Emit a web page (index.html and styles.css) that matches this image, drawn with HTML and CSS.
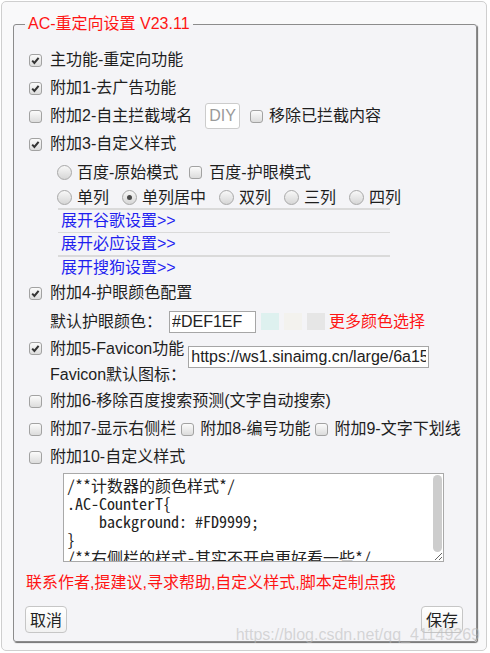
FILE: index.html
```html
<!DOCTYPE html>
<html lang="zh-CN">
<head>
<meta charset="utf-8">
<title>AC-重定向设置</title>
<link rel="stylesheet" href="styles.css">
</head>
<body>
<div class="panel">
  <fieldset class="box">
    <legend class="title">AC-重定向设置 V23.11</legend>

    <div class="row"><span class="cb on"><svg viewBox="0 0 11 11"><path d="M2.2 5.6 4.4 8 8.6 2.8" fill="none" stroke="#333" stroke-width="2"/></svg></span><span>主功能-重定向功能</span></div>
    <div class="row"><span class="cb on"><svg viewBox="0 0 11 11"><path d="M2.2 5.6 4.4 8 8.6 2.8" fill="none" stroke="#333" stroke-width="2"/></svg></span><span>附加1-去广告功能</span></div>
    <div class="row"><span class="cb"></span><span>附加2-自主拦截域名</span><span class="diy">DIY</span><span class="cb cb-mid"></span><span>移除已拦截内容</span></div>
    <div class="row"><span class="cb on"><svg viewBox="0 0 11 11"><path d="M2.2 5.6 4.4 8 8.6 2.8" fill="none" stroke="#333" stroke-width="2"/></svg></span><span>附加3-自定义样式</span></div>

    <div class="row radios r29"><span class="rd"></span><span>百度-原始模式</span><span class="cb cb-mid cb-gap"></span><span>百度-护眼模式</span></div>
    <div class="row radios r21"><span class="rd"></span><span>单列</span><span class="rd rd-gap on"></span><span>单列居中</span><span class="rd rd-gap"></span><span>双列</span><span class="rd rd-gap"></span><span>三列</span><span class="rd rd-gap"></span><span>四列</span></div>

    <div class="links">
      <div class="link thick">展开谷歌设置&gt;&gt;</div>
      <div class="link thin">展开必应设置&gt;&gt;</div>
      <div class="link thick">展开搜狗设置&gt;&gt;</div>
    </div>

    <div class="row"><span class="cb on"><svg viewBox="0 0 11 11"><path d="M2.2 5.6 4.4 8 8.6 2.8" fill="none" stroke="#333" stroke-width="2"/></svg></span><span>附加4-护眼颜色配置</span></div>
    <div class="row r29 indent"><span>默认护眼颜色：</span><input class="hex" type="text" value="#DEF1EF"><span class="sw sw1"></span><span class="sw sw2"></span><span class="sw sw3"></span><span class="more">更多颜色选择</span></div>
    <div class="row fav"><span class="cb on cb-top"><svg viewBox="0 0 11 11"><path d="M2.2 5.6 4.4 8 8.6 2.8" fill="none" stroke="#333" stroke-width="2"/></svg></span><span class="fav-label">附加5-Favicon功能</span><input class="url" type="text" value="https://ws1.sinaimg.cn/large/6a155794ly1g1hn9o8ekzj200w00w0s3.jpg"></div>
    <div class="row r24 indent"><span>Favicon默认图标：</span></div>
    <div class="row"><span class="cb"></span><span>附加6-移除百度搜索预测(文字自动搜索)</span></div>
    <div class="row"><span class="cb"></span><span>附加7-显示右侧栏</span><span class="cb cb-mid cb-near"></span><span>附加8-编号功能</span><span class="cb cb-mid cb-near"></span><span>附加9-文字下划线</span></div>
    <div class="row"><span class="cb"></span><span>附加10-自定义样式</span></div>

    <div class="editor">
      <textarea class="css" wrap="off">/**计数器的颜色样式*/
.AC-CounterT{
    background: #FD9999;
}
/**右侧栏的样式-其实不开启更好看一些*/
#content_right{
    border-left:1px solid #e1e1e1;
}</textarea>
      <span class="thumb"></span>
    </div>

    <div class="contact">联系作者,提建议,寻求帮助,自定义样式,脚本定制点我</div>

    <div class="actions">
      <button class="btn" type="button">取消</button>
      <button class="btn" type="button">保存</button>
    </div>
  </fieldset>
  <div class="wm">https://blog.csdn.net/qq_41149269</div>
</div>
</body>
</html>
```

FILE: styles.css
```css
* {
  box-sizing: border-box;
}

body {
  margin: 0;
  background: #ffffff;
  font-family: "Liberation Sans", "Noto Sans CJK SC", sans-serif;
  font-size: 16px;
  color: #1e1e1e;
}

.panel {
  position: relative;
  margin: 1px;
  width: 486px;
  height: 650px;
  border: 1px solid #cfcfcf;
  border-radius: 5px;
  background: #f9f9fa;
  padding: 11px 9px 0 11px;
}

.box {
  margin: 0;
  width: 464px;
  min-width: 0;
  border: 1px solid #8c8c8c;
  border-radius: 3px;
  box-shadow: 1px 1px 1px #6f6f6f;
  padding: 11px 13px 8px 11px;
  background: #f4f4f7;
}

.title {
  padding: 0 3px;
  color: #ff1414;
  font-size: 16px;
  line-height: 22px;
}

.row {
  display: flex;
  align-items: center;
  height: 28px;
  padding-left: 4px;
  white-space: nowrap;
  line-height: 22px;
}

.r29 { height: 29px; }
.r21 { height: 21px; }
.r24 { height: 24px; }

.indent {
  padding-left: 25px;
}

.radios {
  padding-left: 32px;
}

/* checkbox */
.cb {
  flex: none;
  display: flex;
  align-items: center;
  justify-content: center;
  width: 13px;
  height: 13px;
  margin-right: 8px;
  border: 1px solid #a2a2a2;
  border-radius: 3px;
  background: linear-gradient(#fbfbfb, #dcdcdc);
}

.cb svg {
  width: 11px;
  height: 11px;
}

.cb-mid {
  margin-left: 10px;
  margin-right: 6px;
}

.cb-gap {
  margin-left: 11px;
  margin-right: 7px;
}

.cb-near {
  margin-left: 5px;
  margin-right: 6px;
}

.cb-top {
  align-self: flex-start;
  margin-top: 6px;
}

/* radio */
.rd {
  flex: none;
  display: flex;
  align-items: center;
  justify-content: center;
  width: 15px;
  height: 15px;
  margin-right: 5px;
  border: 1px solid #a8a8a8;
  border-radius: 50%;
  background: linear-gradient(#f8f8f8, #d6d6d6);
}

.rd.on::after {
  content: "";
  width: 5px;
  height: 5px;
  border-radius: 50%;
  background: #4a4a4a;
}

.rd-gap {
  margin-left: 13px;
}

.diy {
  margin-left: 13px;
  height: 26px;
  padding: 0 3px;
  border: 1px solid #cccccc;
  border-radius: 3px;
  background: #ffffff;
  color: #9a9a9a;
  line-height: 24px;
}

/* expand links */
.links {
  margin-left: 33px;
  width: 332px;
}

.link {
  height: 24px;
  padding-left: 3px;
  color: #1f1ff0;
  line-height: 22px;
  border-top: 2px solid #dadada;
}

.link.thin {
  height: 23px;
  border-top-width: 1px;
}

/* eye-care colours */
.hex {
  margin-left: 7px;
  width: 87px;
  height: 22px;
  padding: 0 2px;
  border: 1px solid #a6a6a6;
  background: #ffffff;
  font-family: "Liberation Sans", sans-serif;
  font-size: 16px;
  color: #222222;
}

.sw {
  flex: none;
  width: 18px;
  height: 17px;
  margin-left: 5px;
}

.sw1 { background: #def1ef; }
.sw2 { background: #f3f2ee; }
.sw3 { background: #e6e6e6; }

.more {
  margin-left: 4px;
  color: #ff1414;
}

/* favicon */
.fav {
  align-items: flex-start;
  height: 27px;
}

.fav-label {
  line-height: 25px;
}

.url {
  flex: none;
  margin: 10px 0 0 4px;
  width: 241px;
  height: 22px;
  padding: 0 2px;
  border: 1px solid #a6a6a6;
  background: #ffffff;
  font-family: "Liberation Sans", sans-serif;
  font-size: 16px;
  color: #222222;
}

/* custom css editor */
.editor {
  position: relative;
  margin: 2px 0 0 38px;
  width: 381px;
  height: 89px;
}

.css {
  display: block;
  width: 100%;
  height: 100%;
  margin: 0;
  padding: 2px 14px 2px 3px;
  border: 1px solid #a9a9a9;
  background: #ffffff;
  color: #222222;
  font-family: "Noto Sans Mono CJK SC", "Liberation Mono", monospace;
  font-size: 16px;
  line-height: 18px;
  overflow: hidden;
  resize: both;
}

.thumb {
  position: absolute;
  top: 2px;
  right: 2px;
  width: 9px;
  height: 77px;
  border-radius: 5px;
  background: #cdcdcd;
}

.contact {
  margin-top: 10px;
  padding-left: 1px;
  height: 22px;
  line-height: 22px;
  color: #ff1414;
  white-space: nowrap;
}

.actions {
  display: flex;
  justify-content: space-between;
  margin-top: 12px;
}

.btn {
  height: 27px;
  padding: 0 4px;
  border: 1px solid #c6c6c6;
  border-radius: 4px;
  background: linear-gradient(#ffffff, #f1f1f1);
  font-family: "Noto Sans CJK SC", sans-serif;
  font-size: 16px;
  line-height: 25px;
  color: #222222;
}

.wm {
  position: absolute;
  right: 6px;
  bottom: 6px;
  font-family: "Liberation Sans", sans-serif;
  font-size: 16px;
  line-height: 18px;
  color: rgba(185, 185, 185, 0.55);
  pointer-events: none;
}
```
